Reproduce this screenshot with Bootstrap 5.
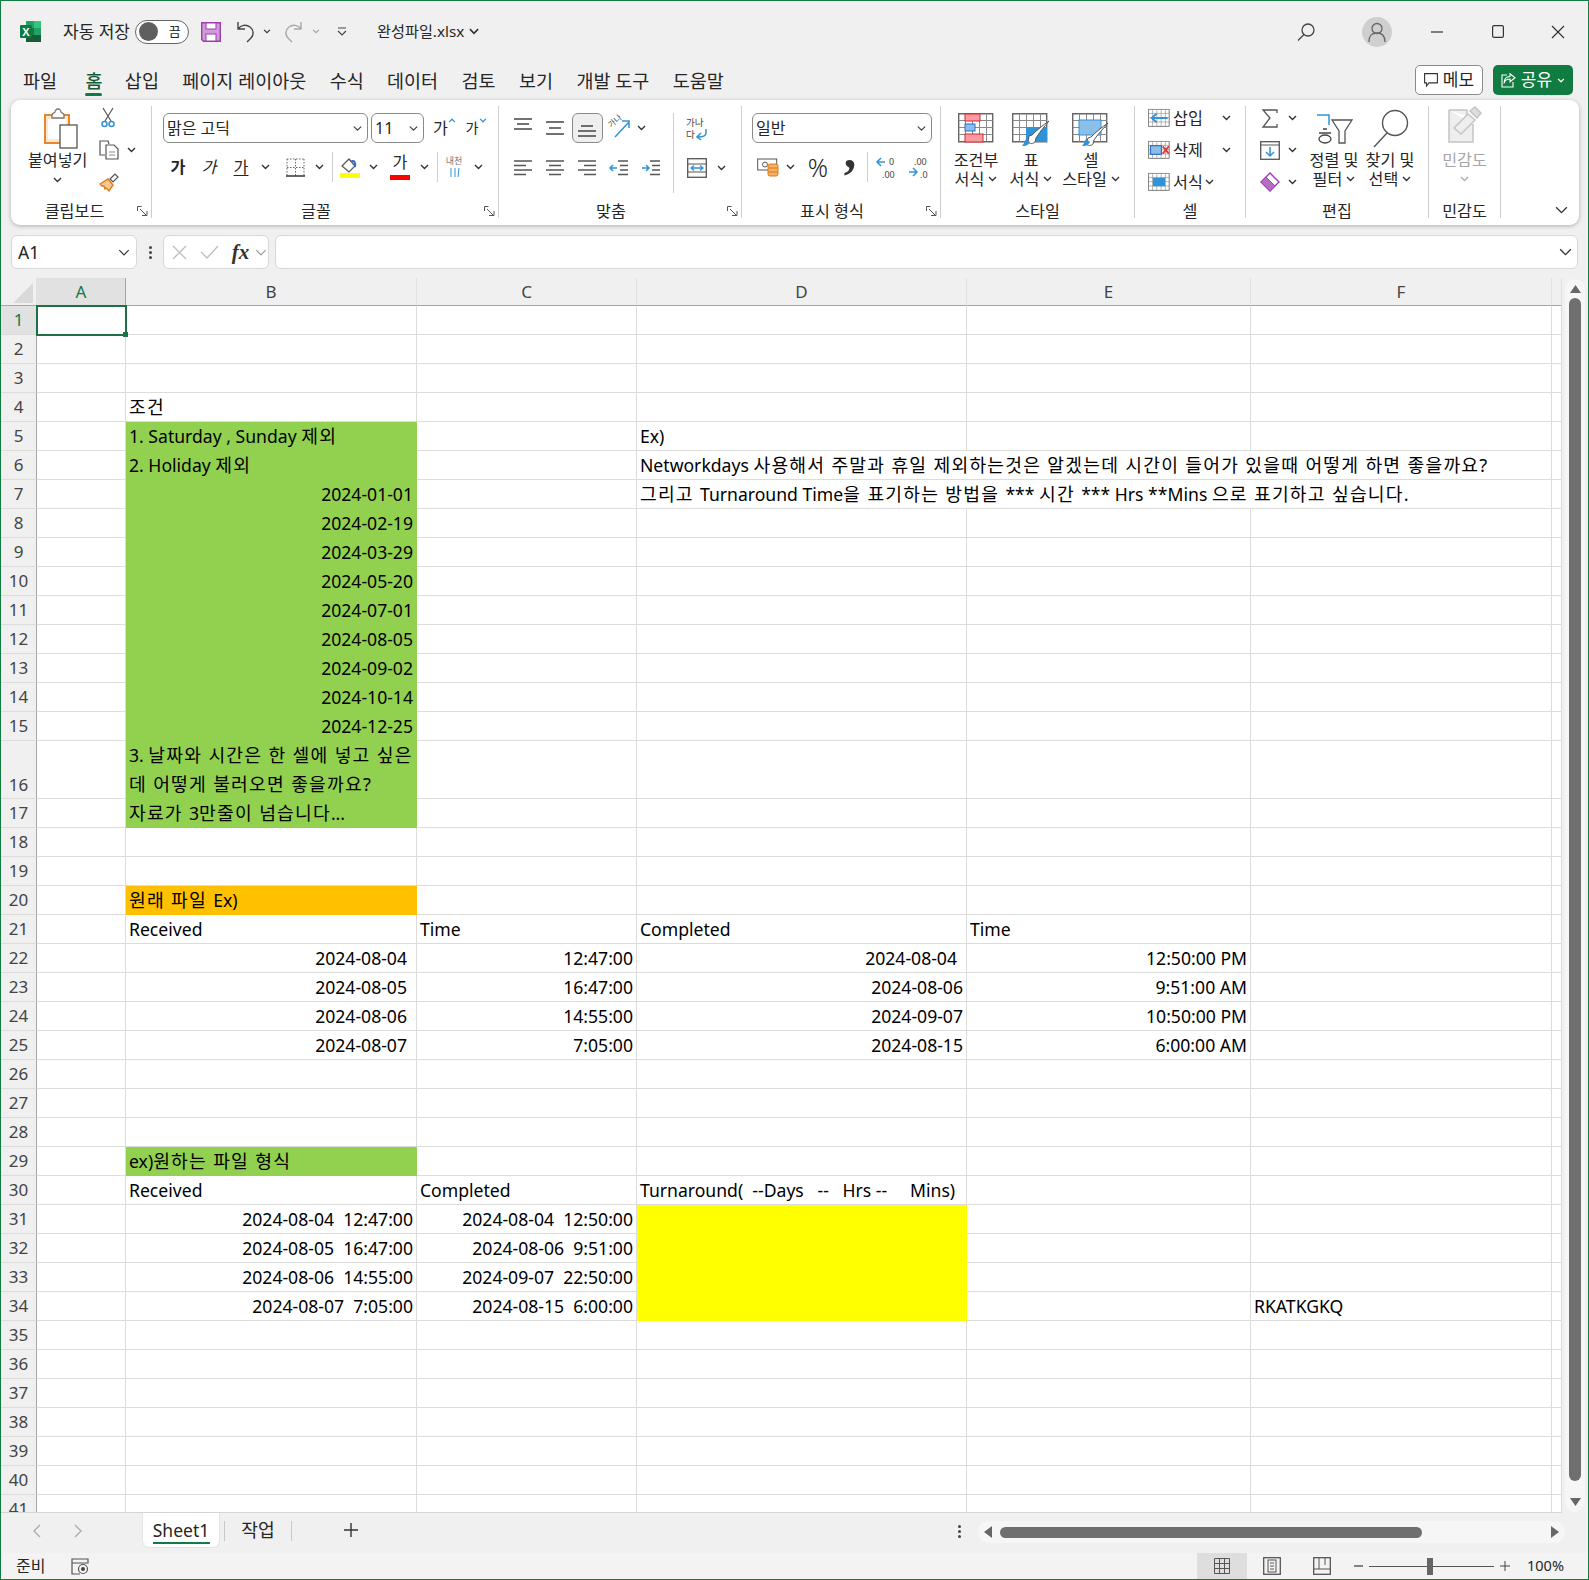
<!DOCTYPE html>
<html lang="ko"><head><meta charset="utf-8"><title>완성파일.xlsx</title>
<link href="https://cdn.jsdelivr.net/npm/bootstrap@5.3.0/dist/css/bootstrap.min.css" rel="stylesheet">
<style>
html,body{margin:0;background:#f0f0f0}
body,.form-select,.btn{font-family:"Noto Sans","Noto Sans CJK KR",sans-serif;color:#262626}
.win{width:1589px;height:1580px;border:1px solid #107c41;background:#f0f0f0;overflow:hidden;display:flex;flex-direction:column}
svg{display:block;flex:none;overflow:visible}
.slot{display:flex;align-items:center;justify-content:center;min-width:0}
.titlebar{height:61px;display:flex;align-items:center;font-size:15.2px;flex:none}
.logo{margin-left:19px;margin-right:22px}
.autosave{font-size:17px;white-space:nowrap}
.toggle{width:54px;height:24px;border:1px solid #666;border-radius:12px;background:#fff;margin:0 12px 0 5px;display:flex;align-items:center;padding:0 4px 0 3px;justify-content:space-between;font-size:13px}
.knob{width:19px;height:19px;border-radius:50%;background:#5f5f5f}
.tsave{margin-right:15px}.tundo{margin-right:7px}.tc1{margin-right:12px}.tredo{margin-right:9px}.tc2{margin-right:17px}.tqat{margin-right:30px}
.fname{margin-right:4px}
.tsp{flex:1}.tsearch{margin-right:47px}
.avatar{width:30px;height:30px;border-radius:50%;background:#cfcfcf;display:flex;align-items:center;justify-content:center;margin-right:39px}
.wctl{margin-right:49px}.wctl3{margin-right:47px}.wctl2{margin-right:23px}
.tabrow{height:38px;display:flex;align-items:flex-start;flex:none;position:relative;padding-left:22px}
.rtab{font-size:18.5px;line-height:37px;margin-right:23.4px;white-space:nowrap;position:relative}
.rtab.home{margin:0 22.400px 0 5px;color:#185c37;font-weight:500}
.rtab.home::after{content:"";position:absolute;left:0;right:0;top:31px;height:3px;border-radius:2px;background:#107c41}
.tabbtns{margin-left:auto;display:flex;gap:10px;margin-right:15px;margin-top:3px}
.memo{height:30px;width:68px;padding:0;font-size:17px;display:flex;align-items:center;justify-content:center;gap:5px;background:#fff;border:1px solid #8a8a8a;border-radius:5px;color:#262626}
.share{height:30px;width:80px;padding:0;font-size:17px;display:flex;align-items:center;justify-content:center;gap:5px;background:#107c41;border:0;border-radius:5px;color:#fff}
.ribbon{margin-left:10px;width:1568px;height:125px;background:#fff;border-radius:9px;box-shadow:0 1px 4px rgba(0,0,0,.28);display:flex;padding:6px 0 7px;flex:none;font-size:16.2px;line-height:20px}
.rg{display:flex;flex-direction:column;position:relative;flex:none;border-right:1px solid #cfcfcf}
.rgb{height:96px;display:flex;flex:none}
.rgl{height:16px;line-height:18px;text-align:center;font-size:16.2px;white-space:nowrap}
.lpad{padding-right:18px}.lpad2{padding-right:13px}
.launch{position:absolute;right:3px;bottom:1px}
.g1{width:141px}.g2{width:347px}.g3{width:243px}.g4{width:199px}.g5{width:194px}.g6{width:111px}.g7{width:183px}.g8{width:72px}.g9{flex:1;border:0;justify-content:flex-end;align-items:flex-end;padding-right:11px;padding-bottom:4px}
.pastec{width:84px;margin-left:5px;display:flex;flex-direction:column;align-items:center;padding-top:3px}
.pastec .picon{margin-left:6px}
.pastec span{margin-top:1px;white-space:nowrap}.pastec svg.chev{margin-top:7px}
.stack3{display:flex;flex-direction:column;gap:6px;margin-top:-1px}
.stack3>div{height:26px;display:flex;align-items:center}
.clipc{width:52px}
.cuti{margin-left:2px}
.fontc{padding:7px 0 0 11px}
.sel{height:30px;border:1px solid #8a8a8a;border-radius:6px;padding:0 18px 0 3px;font-size:16px;background-position:right 4px center;background-size:11px 9px;line-height:1;color:#262626;box-shadow:none}
.row1{display:grid;align-items:center;height:30px}
.row2{display:grid;align-items:center;height:30px;margin-top:9px}
.f1{grid-template-columns:205px 56px 41px 22px}
.f1 .sel2{margin-left:3px;width:53px}.f1 .sel1{width:205px}
.f2{grid-template-columns:30px 32px 32px 16px 10px 24px 24px 2px 34px 13px 40px 8px 18px 16px 32px}
.vsep{width:1px;height:30px;background:#cfcfcf;margin:auto}
.cjkb{font-weight:700}.u{text-decoration:underline;text-underline-offset:2px}
.i{font-style:italic}
.a1{grid-template-columns:32px 32px 32px 32px 12px}.a2{grid-template-columns:repeat(5,32px)}
.alc{padding:7px 0 0 8px;width:174px}
.alc .row2{margin-top:10px}
.alt{margin-top:-7px}.alm{margin-top:-1px}
.active{width:31px;height:30px;background:#efefef;border:1px solid #8a8a8a;border-radius:6px;display:flex;align-items:center;justify-content:center;margin:auto}
.alr{border-left:1px solid #cfcfcf;height:80px;margin-top:7px;padding-left:2px}
.alr .row2{margin-top:12px}.alr .m{grid-template-columns:42px 6px}
.wrapi{width:42px}
.n2{grid-template-columns:30px 16px 40px 24px 10px 30px 34px}
.numc{padding:7px 0 0 10px}.numc .sel{width:180px}
.pct{font-size:25px;line-height:1;font-weight:300}
.cm{font-family:"Liberation Serif",serif;font-size:50px;font-weight:700;line-height:30px;align-self:start;margin-top:-17px;color:#333}
.bigb{display:flex;flex-direction:column;align-items:center;text-align:center;flex:none}
.bigb .bi{height:44px;padding-top:7px;display:flex;align-items:flex-start}
.bigb span{display:flex;align-items:center;gap:4px;justify-content:center;white-space:nowrap;height:19.5px}
.stb{margin-left:10px}.w50{width:50px}.w60{width:60px}
.cel{padding-left:13px;width:96px}.cel .ctxt{margin-left:3px;width:36px;white-space:nowrap}
.cel .ch2{margin-left:17px}.cel .ch3{margin-left:-4px}
.edl{padding-left:12px;width:61px}.edl .e{width:24px;justify-content:center;display:flex}.edl .ec{margin-left:6px}
.w54{width:54px}.w58{width:58px}
.sens{color:#a6a6a6;width:100%}
.sens .bi{padding-top:0}
.find{margin-top:-4px}
.fbar{display:flex;height:34px;margin:10px 0 9px 10px;align-items:stretch;flex:none}
.nbox{width:126px;background:#fff;border:1px solid #d8d8d8;border-radius:6px;font-size:17.5px;display:flex;align-items:center;justify-content:space-between;padding:0 6px}
.fdots{width:26px;display:flex;align-items:center;justify-content:center}
.fxb{width:106px;background:#fff;border:1px solid #d8d8d8;border-radius:6px;display:grid;grid-template-columns:31px 29px 33px 8px;align-items:center;justify-items:center;margin-right:6px}
.fx{font-family:"Liberation Serif",serif;font-style:italic;font-weight:700;font-size:21px;line-height:1;color:#333}
.finput{width:1303px;background:#fff;border:1px solid #d8d8d8;border-radius:6px;display:flex;align-items:center;justify-content:flex-end;padding-right:5px}
.main{display:flex;height:1235px;flex:none}
.gridwrap{width:1561px;height:1235px;overflow:hidden;background:#fff;border-bottom:1px solid #d4d4d4;flex:none}
.sheet{table-layout:fixed;width:1561px;border-collapse:separate;border-spacing:0;font-size:17.6px;line-height:20px;color:#000;background:#fff}
.sheet col.c0{width:36px}.sheet col.ca{width:89px}.sheet col.cb{width:291px}.sheet col.cc{width:220px}.sheet col.cd{width:330px}.sheet col.ce{width:284px}.sheet col.cf{width:301px}.sheet col.cg{width:10px}
.sheet thead th{height:28px;background:#f0f0f0;border-bottom:1px solid #a6a6a6;border-right:1px solid #e0e0e0;font-weight:400;text-align:center;color:#444;font-size:17px;padding:0}
.sheet tbody th{height:29px;background:#f0f0f0;border-bottom:1px solid #dcdcdc;border-right:1px solid #a6a6a6;font-weight:400;text-align:center;color:#444;font-size:17px;padding:0}
.sheet td{height:29px;border-right:1px solid #dcdcdc;border-bottom:1px solid #dcdcdc;padding:0 3px;white-space:nowrap;overflow:visible}
.ko{font-size:18.2px;letter-spacing:1.2px;word-spacing:.3px}
.sheet thead th.hsel{background:#e1e1e1;color:#107c41;border-bottom:1px solid #a6a6a6;border-right:1px solid #a6a6a6}
.sheet tbody th.hsel{background:#e1e1e1;color:#107c41}
.sheet thead th.corner{padding:5px 2px 2px 12px}
.sheet td.r{text-align:right}.sheet td.r10{text-align:right;padding-right:9px}
.sheet td.g{background:#92d050;border-color:#92d050}
.sheet td.o{background:#ffc000;border-color:#ffc000}
.sheet td.y{background:#ffff00;border-color:#ffff00}
.sheet tr.dbl td{height:58px;line-height:28.5px;padding-bottom:0}
.sheet tr.dbl th{height:58px;vertical-align:bottom;padding-bottom:3px}
.sheet td.sel1c{position:relative;outline:2px solid #1e7145;outline-offset:-1px}
.fillh{position:absolute;right:-3px;bottom:-3px;width:5px;height:5px;background:#1e7145}
.vsb{width:26px;padding:1px 0 0 3px;flex:none}
.vtrack{background:#f6f6f6;border-radius:10px;width:20px;height:1233px;display:flex;flex-direction:column;align-items:center;padding:6px 0}
.vthumb{width:12px;height:1183px;background:#6f6f6f;border-radius:6px;margin:5px 0 17px}
.tabbar{height:40px;display:flex;align-items:flex-start;flex:none}
.tn1{margin:11px 0 0 31px}.tn2{margin:11px 0 0 33px}
.stab{margin-left:59px;width:78px;height:35px;background:#fff;border-radius:0 0 7px 7px;border:1px solid #e4e4e4;border-top:0;display:flex;flex-direction:column;align-items:center;font-size:17.5px;line-height:22px;padding-top:6px;position:relative}
.stab i{display:block;width:57px;height:2px;background:#107c41;margin-top:1px}
.tsepb{width:1px;height:20px;background:#c8c8c8;margin-top:8px}
.tab2{width:66px;text-align:center;font-size:18.2px;line-height:22px;padding-top:6px}
.plus{margin:10px 0 0 52px}
.tspc{flex:1}
.hdots{margin:12px 17px 0 0}
.htrack{width:587px;height:22px;background:#f6f6f6;border-radius:10px;margin:8px 23px 0 0;display:flex;align-items:center;padding:0 6px;gap:8px}
.hthumb{width:422px;height:11px;background:#6f6f6f;border-radius:6px}
.status{height:26px;background:#f3f3f3;display:flex;align-items:center;font-size:16px;flex:none}
.st1{margin-left:15px;margin-right:26px}
.vbtn{width:50px;height:26px;display:flex;align-items:center;justify-content:center}
.vbtn.on{background:#dedede}
.zoomw{display:flex;align-items:center;margin-left:7px}
.ztrack{width:125px;height:1px;background:#555;margin:0 6px;position:relative}
.zk{position:absolute;left:58px;top:-8px;width:6px;height:17px;background:#666}
.zpct{margin-left:17px;width:61px;font-size:14.5px}
</style></head><body>
<svg width="0" height="0" class="position-absolute"><defs>
<symbol id="ch" viewBox="0 0 9 6"><path d="M1 1l3.5 3.5L8 1" fill="none" stroke="#333" stroke-width="1.4"/></symbol>
<symbol id="lnch" viewBox="0 0 11 11"><path d="M.5 5V.5h4M3 3l6 6M5 9.5h5V5" fill="none" stroke="#555" stroke-width="1"/></symbol>
<symbol id="lines" viewBox="0 0 18 14"><path d="M0 1h18M3 7h12M0 13h18" stroke="#444" stroke-width="1.3" fill="none"/></symbol>
<symbol id="justL" viewBox="0 0 18 16"><path d="M0 1h18M0 5.500h12M0 10h18M0 14.500h12" stroke="#555" stroke-width="1.3"/></symbol>
<symbol id="justC" viewBox="0 0 18 16"><path d="M0 1h18M3 5.500h12M0 10h18M3 14.500h12" stroke="#555" stroke-width="1.3"/></symbol>
<symbol id="justR" viewBox="0 0 18 16"><path d="M0 1h18M6 5.500h12M0 10h18M6 14.500h12" stroke="#555" stroke-width="1.3"/></symbol>
<symbol id="tbl" viewBox="0 0 36 30"><path d="M.7.7h34v28H.7z" fill="#fff" stroke="#666" stroke-width="1.4"/><path d="M.7 7.500h34M.7 14.500h34M.7 21.500h34M7.500.7v28M14.500.7v28M21.500.7v28M28.500.7v28" stroke="#8a8a8a" stroke-width="1"/></symbol>
</defs></svg>
<div class="win">
<div class="titlebar">
<svg class="logo" width="21" height="21" viewBox="0 0 21 21"><rect x="6" y="0" width="15" height="7" fill="#21a366"/><rect x="14" y="0" width="7" height="7" fill="#33c481"/><rect x="6" y="7" width="15" height="7" fill="#107c41"/><rect x="14" y="7" width="7" height="7" fill="#21a366"/><rect x="6" y="14" width="15" height="7" fill="#185c37"/><rect x="0" y="4" width="12" height="13" rx="1" fill="#0f7b43"/><text x="6" y="14.500" font-size="11" font-weight="700" fill="#fff" text-anchor="middle" font-family="Liberation Sans">X</text></svg>
<span class="autosave">자동 저장</span>
<div class="toggle"><i class="knob"></i><span>끔&nbsp;</span></div>
<svg class="tsave" width="20" height="20" viewBox="0 0 20 20"><path d="M.7.7h18.600v18.600H2.500L.7 17.500z" fill="#cf9bd8" stroke="#a23ab3" stroke-width="1.4"/><rect x="5" y="1" width="10" height="6" fill="#fff" stroke="#a23ab3"/><rect x="5" y="12" width="10" height="7" fill="#fff" stroke="#a23ab3"/></svg>
<svg class="tundo" width="20" height="22" viewBox="0 0 20 22"><path d="M2 1v7h7M2 8c3-4 8-5 12-2s4 8 1 11l-4 4" fill="none" stroke="#444" stroke-width="1.400"/></svg>
<svg class="tc1" width="8" height="5"><use href="#ch"/></svg>
<svg class="tredo" width="20" height="22" viewBox="0 0 20 22"><path d="M18 1v7h-7M18 8c-3-4-8-5-12-2s-4 8-1 11l4 4" fill="none" stroke="#a8a8a8" stroke-width="1.400"/></svg>
<svg class="tc2" width="8" height="5" opacity=".4"><use href="#ch"/></svg>
<svg class="tqat" width="10" height="10" viewBox="0 0 10 10"><path d="M1 1h8M1 4l4 4 4-4" fill="none" stroke="#444" stroke-width="1.200"/></svg>
<span class="fname">완성파일.xlsx</span>
<svg width="12" height="7" viewBox="0 0 9 6"><use href="#ch"/></svg>
<div class="tsp"></div>
<svg class="tsearch" width="18" height="18" viewBox="0 0 18 18"><circle cx="11" cy="7" r="6" fill="none" stroke="#444" stroke-width="1.300"/><path d="M7 11.500L1 17.500" stroke="#444" stroke-width="1.300"/></svg>
<div class="avatar"><svg width="20" height="20" viewBox="0 0 20 20"><circle cx="10" cy="6.500" r="5" fill="none" stroke="#666" stroke-width="1.300"/><path d="M2 20c0-7 3-9 8-9s8 2 8 9" fill="none" stroke="#666" stroke-width="1.300"/></svg></div>
<svg class="wctl" width="12" height="2"><path d="M0 1h12" stroke="#333" stroke-width="1.200"/></svg>
<svg class="wctl3" width="12" height="13" viewBox="0 0 12 13"><rect x=".6" y=".6" width="10.800" height="11.800" rx="1.500" fill="none" stroke="#333" stroke-width="1.200"/></svg>
<svg class="wctl2" width="14" height="14"><path d="M1 1l12 12M13 1L1 13" stroke="#333" stroke-width="1.200"/></svg>
</div>
<div class="tabrow">
<span class="rtab">파일</span><span class="rtab home">홈</span><span class="rtab">삽입</span><span class="rtab">페이지 레이아웃</span><span class="rtab">수식</span><span class="rtab">데이터</span><span class="rtab">검토</span><span class="rtab">보기</span><span class="rtab">개발 도구</span><span class="rtab">도움말</span>
<div class="tabbtns">
<button class="btn memo" type="button"><svg width="14" height="14" viewBox="0 0 14 14"><path d="M.6.6h12.800v9.300H5L2.500 13V9.900H.6z" fill="none" stroke="#333" stroke-width="1.100"/></svg>메모</button>
<button class="btn share" type="button"><svg width="15" height="15" viewBox="0 0 15 15"><path d="M9 .8l5 4-5 4V6C5 6 3.500 8 3 10.500 3 6 5 3.500 9 3.500zM6 2H1v12h11V9" fill="none" stroke="#fff" stroke-width="1.100"/></svg>공유<svg width="8" height="5" viewBox="0 0 9 6"><path d="M1 1l3.500 3.500L8 1" fill="none" stroke="#fff" stroke-width="1.500"/></svg></button>
</div>
</div>
<div class="ribbon">
<div class="rg g1"><div class="rgb">
 <div class="pastec">
  <svg class="picon" width="36" height="40" viewBox="0 0 36 40"><path d="M2 6h24v28H2z" fill="#fbe8d2" stroke="#e8872a" stroke-width="2"/><path d="M5 10h18v20H5z" fill="#fff"/><path d="M9 6c0-2 3-2 3-3s1-3 3-3 3 2 3 3 3 1 3 3v3H9z" fill="#fff" stroke="#777" stroke-width="1.300"/><rect x="17" y="16" width="17" height="23" fill="#fff" stroke="#555" stroke-width="1.300"/></svg>
  <span>붙여넣기</span>
  <svg class="chev" width="9" height="6"><use href="#ch"/></svg>
 </div>
 <div class="stack3 clipc">
  <div><svg width="14" height="22" viewBox="0 0 14 22" class="cuti"><path d="M2 1l8 13M12 1L4 14" stroke="#555" stroke-width="1.200" fill="none"/><circle cx="3.500" cy="17" r="2.500" fill="none" stroke="#2f93d8" stroke-width="1.500"/><circle cx="10.500" cy="17" r="2.500" fill="none" stroke="#2f93d8" stroke-width="1.500"/></svg></div>
  <div><svg width="20" height="20" viewBox="0 0 20 20"><path d="M6 15H1V1h8l1 3" fill="none" stroke="#555" stroke-width="1.200"/><path d="M7 5h8l4 4v10H7z" fill="#fff" stroke="#555" stroke-width="1.200"/><path d="M10 12h6M10 15h6" stroke="#888"/></svg><svg class="ms-2" width="9" height="6"><use href="#ch"/></svg></div>
  <div><svg width="20" height="20" viewBox="0 0 20 20"><path d="M1 12l8-5 5 6-4 6-3-3-1 1-1-3-2 0z" fill="#f6c894" stroke="#e07b14" stroke-width="1.400"/><path d="M11 7l5-5 3 3-5 5z" fill="#fff" stroke="#555" stroke-width="1.200"/></svg></div>
 </div>
 </div><div class="rgl lpad2">클립보드</div><svg class="launch" width="11" height="11"><use href="#lnch"/></svg></div>

<div class="rg g2"><div class="rgb"><div class="fontc">
 <div class="row1 f1">
  <select class="form-select sel sel1" aria-label="글꼴"><option>맑은 고딕</option></select>
  <select class="form-select sel sel2" aria-label="크기"><option>11</option></select>
  <div class="slot"><span class="d-flex">가<svg width="8" height="5" viewBox="0 0 9 6"><path d="M1 5l3.500-3.500L8 5" fill="none" stroke="#2f93d8" stroke-width="1.500"/></svg></span></div>
  <div class="slot"><span class="d-flex small">가<svg width="8" height="5" viewBox="0 0 9 6"><path d="M1 1l3.500 3.500L8 1" fill="none" stroke="#2f93d8" stroke-width="1.500"/></svg></span></div>
 </div>
 <div class="row2 f2">
  <div class="slot cjkb">가</div><div class="slot i">가</div><div class="slot u">가</div><div class="slot"><svg width="9" height="6"><use href="#ch"/></svg></div><div></div>
  <div class="slot"><svg width="19" height="19" viewBox="0 0 19 19"><path d="M1 1h17M1 9.500h17M9.500 1v17M1 1v17M18 1v17" fill="none" stroke="#666" stroke-dasharray="1.500 1.500"/><path d="M0 18h19" stroke="#333" stroke-width="1.500"/></svg></div>
  <div class="slot"><svg width="9" height="6"><use href="#ch"/></svg></div><div class="vsep"></div>
  <div class="slot"><svg width="20" height="21" viewBox="0 0 20 21"><path d="M2 9l7-7 6 7-6 6z" fill="#fff" stroke="#555" stroke-width="1.200"/><path d="M11 5c3-3 5 1 4 5" fill="none" stroke="#2f6fc8" stroke-width="2"/><rect y="16" width="20" height="5" fill="#ffff00"/></svg></div>
  <div class="slot"><svg width="9" height="6"><use href="#ch"/></svg></div>
  <div class="slot"><div class="d-flex flex-column align-items-center"><span class="lh-1">가</span><svg class="mt-1" width="20" height="5"><rect width="20" height="5" fill="#f00"/></svg></div></div>
  <div class="slot"><svg width="9" height="6"><use href="#ch"/></svg></div><div class="vsep"></div>
  <div class="slot"><svg width="18" height="24" viewBox="0 0 18 24"><text x="9" y="9" font-size="9" text-anchor="middle" fill="#777" font-family="Noto Sans CJK KR">내천</text><path d="M6 13v9M10 13v9M14 13l-1 9" stroke="#2f93d8"/></svg></div>
  <div class="slot"><svg width="9" height="6"><use href="#ch"/></svg></div>
 </div></div>
 </div><div class="rgl lpad">글꼴</div><svg class="launch" width="11" height="11"><use href="#lnch"/></svg></div>

<div class="rg g3"><div class="rgb">
 <div class="alc">
  <div class="row1 a1">
   <div class="slot"><svg class="alt" width="18" height="14"><path d="M0 1h18M3 6h12M0 11h18" stroke="#444" stroke-width="1.300"/></svg></div>
   <div class="slot"><svg class="alm" width="18" height="14"><use href="#lines"/></svg></div>
   <div class="active"><svg width="18" height="14" class="mt-1"><path d="M3 3h12M0 8h18M0 13h18" stroke="#444" stroke-width="1.300"/></svg></div>
   <div class="slot"><svg width="22" height="22" viewBox="0 0 22 22"><text x="3" y="11" font-size="8" fill="#444" transform="rotate(-40 3 11)" font-family="Noto Sans CJK KR">가나</text><path d="M7 20L21 5M14 4h7v7" fill="none" stroke="#2f93d8" stroke-width="1.500"/></svg></div>
   <div class="slot"><svg width="9" height="6"><use href="#ch"/></svg></div>
  </div>
  <div class="row2 a2">
   <div class="slot"><svg width="18" height="16"><use href="#justL"/></svg></div>
   <div class="slot"><svg width="18" height="16"><use href="#justC"/></svg></div>
   <div class="slot"><svg width="18" height="16"><use href="#justR"/></svg></div>
   <div class="slot"><svg width="18" height="16" viewBox="0 0 18 16"><path d="M8 1h10M10 5.500h8M10 10h8M8 14.500h10" stroke="#555" stroke-width="1.300"/><path d="M0 8h7M3 5L0 8l3 3" stroke="#2f93d8" stroke-width="1.500" fill="none"/></svg></div>
   <div class="slot"><svg width="18" height="16" viewBox="0 0 18 16"><path d="M8 1h10M10 5.500h8M10 10h8M8 14.500h10" stroke="#555" stroke-width="1.300"/><path d="M0 8h7M4 5l3 3-3 3" stroke="#2f93d8" stroke-width="1.500" fill="none"/></svg></div>
  </div>
 </div>
 <div class="alr">
  <div class="wrapi slot"><svg width="22" height="24" viewBox="0 0 22 24" class="mt-1"><text x="0" y="9" font-size="9.500" fill="#444" font-family="Noto Sans CJK KR">가나</text><text x="0" y="21" font-size="9.500" fill="#444" font-family="Noto Sans CJK KR">다</text><path d="M20 12v4c0 3-3 4-8 4M15 16l-4 4 4 3" fill="none" stroke="#2f93d8" stroke-width="1.500"/></svg></div>
  <div class="row2 m">
   <div class="slot"><svg width="20" height="20" viewBox="0 0 20 20"><rect x=".7" y=".7" width="18.600" height="18.600" fill="#fff" stroke="#555" stroke-width="1.300"/><path d="M1 6h18M1 14h18" stroke="#555"/><path d="M4 10h12M7 7.500L4 10l3 2.500M13 7.500l3 2.500-3 2.500" stroke="#2f93d8" stroke-width="1.300" fill="none"/></svg></div>
   <div class="slot"><svg width="9" height="6"><use href="#ch"/></svg></div>
  </div>
 </div>
 </div><div class="rgl lpad">맞춤</div><svg class="launch" width="11" height="11"><use href="#lnch"/></svg></div>

<div class="rg g4"><div class="rgb"><div class="numc">
  <select class="form-select sel" aria-label="표시 형식"><option>일반</option></select>
  <div class="row2 n2">
   <div class="slot"><svg width="21" height="18" viewBox="0 0 21 18"><rect x=".7" y="1" width="19" height="11" fill="#fff" stroke="#555"/><circle cx="8" cy="6.500" r="2.500" fill="none" stroke="#555"/><rect x="11" y="6" width="10" height="12" rx="2" fill="#f3b069" stroke="#e07b14"/><path d="M11 10h10M11 14h10" stroke="#e07b14"/></svg></div>
   <div class="slot"><svg width="9" height="6"><use href="#ch"/></svg></div>
   <div class="slot pct">%</div><div class="slot cm">,</div><div class="vsep"></div>
   <div class="slot"><svg width="21" height="20" viewBox="0 0 21 20"><path d="M0 5h8M4 1L0 5l4 4" fill="none" stroke="#2f93d8" stroke-width="1.500"/><text x="12" y="8" font-size="9" fill="#444" font-family="Noto Sans">0</text><text x="5" y="20.500" font-size="9" fill="#444" font-family="Noto Sans">.00</text></svg></div>
   <div class="slot"><svg width="21" height="20" viewBox="0 0 21 20"><path d="M0 15h8M4 11l4 4-4 4" fill="none" stroke="#2f93d8" stroke-width="1.500"/><text x="5" y="8" font-size="9" fill="#444" font-family="Noto Sans">.00</text><text x="11" y="20.500" font-size="9" fill="#444" font-family="Noto Sans">.0</text></svg></div>
  </div></div>
 </div><div class="rgl lpad">표시 형식</div><svg class="launch" width="11" height="11"><use href="#lnch"/></svg></div>

<div class="rg g5"><div class="rgb"><div class="d-flex stb">
  <div class="bigb w50"><div class="bi"><svg width="36" height="30"><use href="#tbl"/><rect x="7" y="1" width="15" height="7" fill="#ff9aa5" stroke="#d42a2a"/><rect x="7" y="11" width="10" height="7" fill="#8cbfe8" stroke="#2f6fc8"/><rect x="7" y="21" width="18" height="8" fill="#ff9aa5" stroke="#d42a2a"/></svg></div><span>조건부</span><span>서식<svg width="9" height="6"><use href="#ch"/></svg></span></div>
  <div class="bigb w60"><div class="bi"><svg width="38" height="34" viewBox="0 0 38 34"><use href="#tbl" width="36" height="30"/><rect x="14" y="14" width="21" height="15" fill="#2f93d8"/><path d="M16 29c2 2 5 2 7 0l1-4c3-5 8-11 13-17-6 4-12 9-17 14l-3 1z" fill="#fff" stroke="#555"/><path d="M10 33c3 0 6 0 8-4l-4-3c-2 3-2 5-4 7z" fill="#2f93d8"/></svg></div><span>표</span><span>서식<svg width="9" height="6"><use href="#ch"/></svg></span></div>
  <div class="bigb w60"><div class="bi"><svg width="38" height="34" viewBox="0 0 38 34"><use href="#tbl" width="36" height="30"/><rect x="7" y="7" width="22" height="15" fill="#8cbfe8" stroke="#2f93d8"/><path d="M14 31c2 2 5 2 7 0l1-4c3-5 9-11 14-17-6 4-12 9-17 14l-3 1z" fill="#fff" stroke="#555"/><path d="M10 33c3 0 6 0 8-4l-4-3c-2 3-2 5-4 7z" fill="#2f93d8"/></svg></div><span>셀</span><span>스타일<svg width="9" height="6"><use href="#ch"/></svg></span></div>
 </div></div><div class="rgl">스타일</div></div>

<div class="rg g6"><div class="rgb"><div class="stack3 cel">
  <div><svg width="22" height="20" viewBox="0 0 36 30"><use href="#tbl"/><path d="M32 15H6M14 8l-8 7 8 7" fill="none" stroke="#2f93d8" stroke-width="3"/></svg><span class="ctxt">삽입</span><svg class="ch2" width="9" height="6"><use href="#ch"/></svg></div>
  <div><svg width="22" height="20" viewBox="0 0 36 30"><use href="#tbl"/><rect x="4" y="8" width="18" height="14" fill="#8cbfe8" stroke="#2f6fc8" stroke-width="2"/><path d="M24 9l10 12M34 9L24 21" stroke="#e03a3a" stroke-width="3"/></svg><span class="ctxt">삭제</span><svg class="ch2" width="9" height="6"><use href="#ch"/></svg></div>
  <div><svg width="22" height="20" viewBox="0 0 36 30"><use href="#tbl"/><rect x="8" y="8" width="20" height="14" fill="#2f93d8"/></svg><span class="ctxt">서식</span><svg class="ch3" width="9" height="6"><use href="#ch"/></svg></div>
 </div></div><div class="rgl">셀</div></div>

<div class="rg g7"><div class="rgb"><div class="stack3 edl">
  <div><div class="e"><svg width="16" height="19" viewBox="0 0 16 19"><path d="M15 4V1H1l7 8-7 9h14v-3" fill="none" stroke="#555" stroke-width="1.300"/></svg></div><svg class="ec" width="9" height="6"><use href="#ch"/></svg></div>
  <div><div class="e"><svg width="20" height="19" viewBox="0 0 20 19"><rect x=".7" y=".7" width="18.600" height="17.600" fill="#fff" stroke="#555" stroke-width="1.300"/><path d="M1 4h18" stroke="#555"/><path d="M10 6v9M6 11l4 4 4-4" fill="none" stroke="#2f93d8" stroke-width="1.500"/></svg></div><svg class="ec" width="9" height="6"><use href="#ch"/></svg></div>
  <div><div class="e"><svg width="20" height="20" viewBox="0 0 20 20"><path d="M1 10l9-9 9 9-9 9z" fill="#fff" stroke="#a23ab3" stroke-width="1.400"/><path d="M1 10l5-5 9 9-5 5z" fill="#b56cc2" stroke="#a23ab3"/></svg></div><svg class="ec" width="9" height="6"><use href="#ch"/></svg></div>
 </div>
 <div class="bigb w54"><div class="bi"><svg width="38" height="32" viewBox="0 0 38 32"><path d="M2 2h12v10" fill="none" stroke="#2f93d8" stroke-width="1.500"/><path d="M8 16h4M4 20h12" stroke="#444" stroke-width="1.300"/><ellipse cx="10" cy="26" rx="6" ry="4" fill="none" stroke="#444" stroke-width="1.300"/><path d="M17 7h20l-7 11v12h-6V18z" fill="#fff" stroke="#555" stroke-width="1.300"/></svg></div><span>정렬 및</span><span>필터<svg width="9" height="6"><use href="#ch"/></svg></span></div>
 <div class="bigb w58"><div class="bi"><svg class="find" width="38" height="40" viewBox="0 0 38 40"><circle cx="24" cy="14" r="12.500" fill="none" stroke="#555" stroke-width="1.400"/><path d="M16 24L3 38" stroke="#555" stroke-width="1.400"/></svg></div><span>찾기 및</span><span>선택<svg width="9" height="6"><use href="#ch"/></svg></span></div>
 </div><div class="rgl">편집</div></div>

<div class="rg g8"><div class="rgb"><div class="bigb sens"><div class="bi"><svg width="34" height="38" viewBox="0 0 34 38"><path d="M1 4h18v6M1 4v32h24V18" fill="#eee" stroke="#c4c4c4" stroke-width="1.500"/><path d="M6 22l14-14 7 6-14 14z" fill="#eee" stroke="#c4c4c4" stroke-width="1.500"/><path d="M22 5l5-4 6 6-4 5z" fill="#ddd" stroke="#c4c4c4" stroke-width="1.500"/></svg></div><span>민감도</span><span><svg width="9" height="6" opacity=".4"><use href="#ch"/></svg></span></div></div><div class="rgl">민감도</div></div>
<div class="rg g9"><svg width="13" height="8" viewBox="0 0 9 6"><path d="M.5 1l4 4 4-4" fill="none" stroke="#333"/></svg></div>
</div>
<div class="fbar">
 <div class="nbox"><span>A1</span><svg width="12" height="7" viewBox="0 0 9 6"><path d="M.5 1l4 4 4-4" fill="none" stroke="#333"/></svg></div>
 <div class="fdots"><svg width="3" height="13"><circle cx="1.500" cy="1.500" r="1.500" fill="#444"/><circle cx="1.500" cy="6.500" r="1.500" fill="#444"/><circle cx="1.500" cy="11.500" r="1.500" fill="#444"/></svg></div>
 <div class="fxb"><svg width="15" height="15"><path d="M1 1l13 13M14 1L1 14" stroke="#bdbdbd" stroke-width="1.300"/></svg><svg width="19" height="14"><path d="M1 7l6 6L18 1" fill="none" stroke="#bdbdbd" stroke-width="1.300"/></svg><span class="fx">fx</span><svg width="12" height="7" viewBox="0 0 9 6"><path d="M.5 1l4 4 4-4" fill="none" stroke="#999"/></svg></div>
 <div class="finput"><svg width="13" height="8" viewBox="0 0 9 6"><path d="M.5 1l4 4 4-4" fill="none" stroke="#333"/></svg></div>
</div>
<div class="main">
<div class="gridwrap">
<table class="sheet">
<colgroup><col class="c0"><col class="ca"><col class="cb"><col class="cc"><col class="cd"><col class="ce"><col class="cf"><col class="cg"></colgroup>
<thead><tr><th class="corner"><svg width="20" height="20"><path d="M20 0v20H0z" fill="#d9d9d9"/></svg></th><th class="hsel">A</th><th>B</th><th>C</th><th>D</th><th>E</th><th>F</th><th></th></tr></thead>
<tbody>
<tr><th class="hsel">1</th><td class="sel1c"><i class="fillh"></i></td><td></td><td></td><td></td><td></td><td></td><td></td></tr>
<tr><th>2</th><td></td><td></td><td></td><td></td><td></td><td></td><td></td></tr>
<tr><th>3</th><td></td><td></td><td></td><td></td><td></td><td></td><td></td></tr>
<tr><th>4</th><td></td><td><span class="ko">조건</span></td><td></td><td></td><td></td><td></td><td></td></tr>
<tr><th>5</th><td></td><td class="g">1. Saturday , Sunday <span class="ko">제외</span></td><td></td><td>Ex)</td><td></td><td></td><td></td></tr>
<tr><th>6</th><td></td><td class="g">2. Holiday <span class="ko">제외</span></td><td></td><td colspan="3">Networkdays <span class="ko">사용해서 주말과 휴일 제외하는것은 알겠는데 시간이 들어가 있을때 어떻게 하면 좋을까요?</span></td><td></td></tr>
<tr><th>7</th><td></td><td class="g r">2024-01-01</td><td></td><td colspan="3"><span class="ko">그리고 </span>Turnaround Time<span class="ko">을 표기하는 방법을 </span>*** <span class="ko">시간 </span>*** Hrs **Mins <span class="ko">으로 표기하고 싶습니다.</span></td><td></td></tr>
<tr><th>8</th><td></td><td class="g r">2024-02-19</td><td></td><td></td><td></td><td></td><td></td></tr>
<tr><th>9</th><td></td><td class="g r">2024-03-29</td><td></td><td></td><td></td><td></td><td></td></tr>
<tr><th>10</th><td></td><td class="g r">2024-05-20</td><td></td><td></td><td></td><td></td><td></td></tr>
<tr><th>11</th><td></td><td class="g r">2024-07-01</td><td></td><td></td><td></td><td></td><td></td></tr>
<tr><th>12</th><td></td><td class="g r">2024-08-05</td><td></td><td></td><td></td><td></td><td></td></tr>
<tr><th>13</th><td></td><td class="g r">2024-09-02</td><td></td><td></td><td></td><td></td><td></td></tr>
<tr><th>14</th><td></td><td class="g r">2024-10-14</td><td></td><td></td><td></td><td></td><td></td></tr>
<tr><th>15</th><td></td><td class="g r">2024-12-25</td><td></td><td></td><td></td><td></td><td></td></tr>
<tr class="dbl"><th>16</th><td></td><td class="g">3. <span class="ko">날짜와 시간은 한 셀에 넣고 싶은<br>데 어떻게 불러오면 좋을까요?</span></td><td></td><td></td><td></td><td></td><td></td></tr>
<tr><th>17</th><td></td><td class="g"><span class="ko">자료가 </span>3<span class="ko">만줄이 넘습니다</span>...</td><td></td><td></td><td></td><td></td><td></td></tr>
<tr><th>18</th><td></td><td></td><td></td><td></td><td></td><td></td><td></td></tr>
<tr><th>19</th><td></td><td></td><td></td><td></td><td></td><td></td><td></td></tr>
<tr><th>20</th><td></td><td class="o"><span class="ko">원래 파일 </span>Ex)</td><td></td><td></td><td></td><td></td><td></td></tr>
<tr><th>21</th><td></td><td>Received</td><td>Time</td><td>Completed</td><td>Time</td><td></td><td></td></tr>
<tr><th>22</th><td></td><td class="r10">2024-08-04</td><td class="r">12:47:00</td><td class="r10">2024-08-04</td><td class="r">12:50:00 PM</td><td></td><td></td></tr>
<tr><th>23</th><td></td><td class="r10">2024-08-05</td><td class="r">16:47:00</td><td class="r">2024-08-06</td><td class="r">9:51:00 AM</td><td></td><td></td></tr>
<tr><th>24</th><td></td><td class="r10">2024-08-06</td><td class="r">14:55:00</td><td class="r">2024-09-07</td><td class="r">10:50:00 PM</td><td></td><td></td></tr>
<tr><th>25</th><td></td><td class="r10">2024-08-07</td><td class="r">7:05:00</td><td class="r">2024-08-15</td><td class="r">6:00:00 AM</td><td></td><td></td></tr>
<tr><th>26</th><td></td><td></td><td></td><td></td><td></td><td></td><td></td></tr>
<tr><th>27</th><td></td><td></td><td></td><td></td><td></td><td></td><td></td></tr>
<tr><th>28</th><td></td><td></td><td></td><td></td><td></td><td></td><td></td></tr>
<tr><th>29</th><td></td><td class="g">ex)<span class="ko">원하는 파일 형식</span></td><td></td><td></td><td></td><td></td><td></td></tr>
<tr><th>30</th><td></td><td>Received</td><td>Completed</td><td>Turnaround(&nbsp;&nbsp;--Days&nbsp;&nbsp;&nbsp;--&nbsp;&nbsp;&nbsp;Hrs --&nbsp;&nbsp;&nbsp;&nbsp;&nbsp;Mins)</td><td></td><td></td><td></td></tr>
<tr><th>31</th><td></td><td class="r">2024-08-04&nbsp;&nbsp;12:47:00</td><td class="r">2024-08-04&nbsp;&nbsp;12:50:00</td><td class="y"></td><td></td><td></td><td></td></tr>
<tr><th>32</th><td></td><td class="r">2024-08-05&nbsp;&nbsp;16:47:00</td><td class="r">2024-08-06&nbsp;&nbsp;9:51:00</td><td class="y"></td><td></td><td></td><td></td></tr>
<tr><th>33</th><td></td><td class="r">2024-08-06&nbsp;&nbsp;14:55:00</td><td class="r">2024-09-07&nbsp;&nbsp;22:50:00</td><td class="y"></td><td></td><td></td><td></td></tr>
<tr><th>34</th><td></td><td class="r">2024-08-07&nbsp;&nbsp;7:05:00</td><td class="r">2024-08-15&nbsp;&nbsp;6:00:00</td><td class="y"></td><td></td><td>RKATKGKQ</td><td></td></tr>
<tr><th>35</th><td></td><td></td><td></td><td></td><td></td><td></td><td></td></tr>
<tr><th>36</th><td></td><td></td><td></td><td></td><td></td><td></td><td></td></tr>
<tr><th>37</th><td></td><td></td><td></td><td></td><td></td><td></td><td></td></tr>
<tr><th>38</th><td></td><td></td><td></td><td></td><td></td><td></td><td></td></tr>
<tr><th>39</th><td></td><td></td><td></td><td></td><td></td><td></td><td></td></tr>
<tr><th>40</th><td></td><td></td><td></td><td></td><td></td><td></td><td></td></tr>
<tr><th>41</th><td></td><td></td><td></td><td></td><td></td><td></td><td></td></tr>
</tbody></table>
</div>
<div class="vsb"><div class="vtrack"><svg width="11" height="8"><path d="M5.500 0l5.500 8H0z" fill="#666"/></svg><div class="vthumb"></div><svg width="11" height="8"><path d="M5.500 8L11 0H0z" fill="#666"/></svg></div></div>
</div>
<div class="tabbar">
 <svg class="tn1" width="9" height="14"><path d="M8 1L2 7l6 6" fill="none" stroke="#aaa" stroke-width="1.300"/></svg>
 <svg class="tn2" width="9" height="14"><path d="M1 1l6 6-6 6" fill="none" stroke="#aaa" stroke-width="1.300"/></svg>
 <div class="stab">Sheet1<i></i></div>
 <div class="ms-1 tsepb"></div><div class="tab2">작업</div><div class="tsepb"></div>
 <svg class="plus" width="14" height="14"><path d="M7 0v14M0 7h14" stroke="#333" stroke-width="1.400"/></svg>
 <div class="tspc"></div>
 <svg class="hdots" width="3" height="13"><circle cx="1.500" cy="1.500" r="1.500" fill="#444"/><circle cx="1.500" cy="6.500" r="1.500" fill="#444"/><circle cx="1.500" cy="11.500" r="1.500" fill="#444"/></svg>
 <div class="htrack"><svg width="8" height="12"><path d="M0 6l8-6v12z" fill="#666"/></svg><div class="hthumb"></div><div class="flex-grow-1"></div><svg width="8" height="12"><path d="M8 6L0 0v12z" fill="#666"/></svg></div>
</div>
<div class="status">
 <span class="st1">준비</span>
 <svg width="18" height="17" viewBox="0 0 18 17"><path d="M1 1h16v4H1zM1 5v11h8" fill="none" stroke="#555" stroke-width="1.200"/><circle cx="12" cy="11" r="4.500" fill="none" stroke="#555" stroke-width="1.200"/><circle cx="12" cy="11" r="2" fill="#444"/></svg>
 <div class="tsp"></div>
 <div class="vbtn on"><svg width="16" height="16"><path d="M.5.500h15v15H.5zM5.500.500v15M10.500.500v15M.5 5.500h15M.5 10.500h15" fill="none" stroke="#555"/></svg></div>
 <div class="vbtn"><svg width="18" height="18"><rect x=".7" y=".7" width="16.600" height="16.600" fill="none" stroke="#555" stroke-width="1.300"/><rect x="5" y="3" width="8" height="12" fill="none" stroke="#555"/><path d="M7 6h4M7 9h4M7 12h4" stroke="#555"/></svg></div>
 <div class="vbtn"><svg width="18" height="18"><rect x=".7" y=".7" width="16.600" height="16.600" fill="none" stroke="#555" stroke-width="1.300"/><path d="M1 12h16M6 1v11M12 1v7" stroke="#555" fill="none"/></svg></div>
 <div class="zoomw"><svg width="9" height="2"><path d="M0 1h9" stroke="#444" stroke-width="1.300"/></svg><div class="ztrack"><div class="zk"></div></div><svg width="10" height="10"><path d="M0 5h10M5 0v10" stroke="#444"/></svg><span class="zpct">100%</span></div>
</div>
</div>
<script src="https://cdn.jsdelivr.net/npm/bootstrap@5.3.0/dist/js/bootstrap.bundle.min.js"></script>
</body></html>
